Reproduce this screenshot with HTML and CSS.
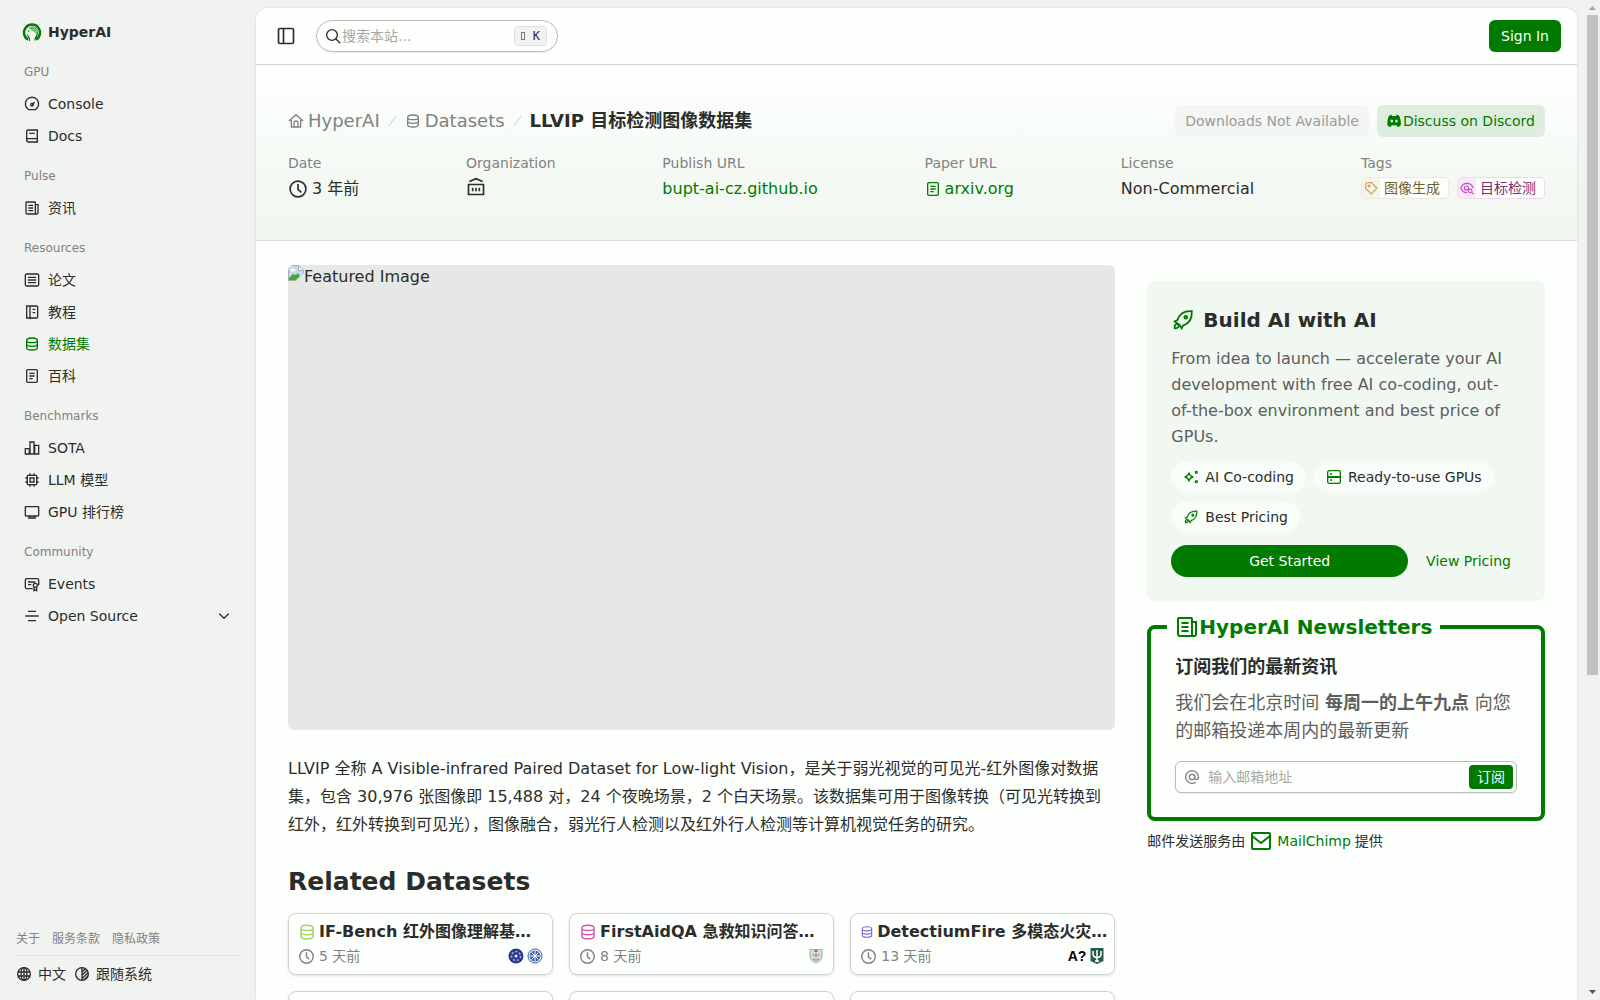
FILE: index.html
```
<!DOCTYPE html>
<html lang="zh-CN">
<head>
<meta charset="utf-8">
<meta name="viewport" content="width=device-width, initial-scale=1">
<title>LLVIP 目标检测图像数据集 | HyperAI</title>
<link rel="stylesheet" href="styles.css">
</head>
<body>
<svg class="sprite" aria-hidden="true">
  <symbol id="i-db" viewBox="0 0 24 24"><path d="M4 6.500C4 4 7 3 12 3s8 1 8 3.500v11c0 2.500-3 3.500-8 3.500s-8-1-8-3.500zM4 7c0 2 3.500 3 8 3s8-1 8-3M4 12.500c0 2 3.500 3 8 3s8-1 8-3"/></symbol>
  <symbol id="i-gauge" viewBox="0 0 24 24"><path d="M7 20.500A10 10 0 1 1 17 20.500zM12 13l4-4"/><circle cx="12" cy="13" r="2"/></symbol>
  <symbol id="i-book" viewBox="0 0 24 24"><path d="M20 16H6.500a2.500 2.500 0 0 0 0 5H20V3H6a2 2 0 0 0-2 2v13.500M8 8h8"/></symbol>
  <symbol id="i-news" viewBox="0 0 24 24"><path d="M17 21H5a2 2 0 0 1-2-2V4a1 1 0 0 1 1-1h12a1 1 0 0 1 1 1zh2a2 2 0 0 0 2-2V7h-4M6.500 8h7M6.500 12h7M6.500 16h7"/></symbol>
  <symbol id="i-article" viewBox="0 0 24 24"><rect x="2" y="3" width="20" height="18" rx="2"/><path d="M6 8h12M6 12h12M6 16h12"/></symbol>
  <symbol id="i-notebook" viewBox="0 0 24 24"><path d="M4 3h15a1.500 1.500 0 0 1 1.500 1.500v15a1.500 1.500 0 0 1-1.500 1.500H4zM9 3v20M13 8h4M13 13h4"/></symbol>
  <symbol id="i-file" viewBox="0 0 24 24"><rect x="4" y="2.500" width="16" height="19" rx="2"/><path d="M8 8h8M8 12h8M8 16h5"/></symbol>
  <symbol id="i-bars" viewBox="0 0 24 24"><path d="M2 13h6v8H2zM9 3h6v18H9zM16 8h6v13h-6z"/></symbol>
  <symbol id="i-cpu" viewBox="0 0 24 24"><rect x="5" y="5" width="14" height="14" rx="1"/><path d="M9 9h6v6H9zM9 2v3M15 2v3M9 19v3M15 19v3M2 9h3M2 15h3M19 9h3M19 15h3"/></symbol>
  <symbol id="i-monitor" viewBox="0 0 24 24"><rect x="2" y="4" width="20" height="14" rx="1"/><path d="M9 18v3M15 18v3M6 21h12"/></symbol>
  <symbol id="i-event" viewBox="0 0 24 24"><path d="M13 19H4a2 2 0 0 1-2-2V6a2 2 0 0 1 2-2h16a2 2 0 0 1 2 2v8M6 9h11M6 13h5M15 17v5l2-1 2 1v-5"/><circle cx="17" cy="14" r="3"/></symbol>
  <symbol id="i-lines" viewBox="0 0 24 24"><path d="M6 5h12M2 12h20M6 19h12"/></symbol>
  <symbol id="i-down" viewBox="0 0 24 24"><path d="m5 8.500 7 7 7-7"/></symbol>
  <symbol id="i-globe" viewBox="0 0 24 24"><circle cx="12" cy="12" r="9.500"/><ellipse cx="12" cy="12" rx="4.500" ry="9.500"/><path d="M3 9h18M3 15h18M12 2v20"/></symbol>
  <symbol id="i-contrast" viewBox="0 0 24 24"><circle cx="12" cy="12" r="9.500"/><path d="M12 2v20M12 9l5-5M12 14l8-8M12 19l9-9M15 21l6-6"/></symbol>
  <symbol id="i-side" viewBox="0 0 24 24"><rect x="3" y="3" width="18" height="18" rx="1.500"/><path d="M9 3v18"/></symbol>
  <symbol id="i-search" viewBox="0 0 24 24"><circle cx="10.500" cy="10.500" r="8"/><path d="m16 16 7 7"/></symbol>
  <symbol id="i-home" viewBox="0 0 24 24"><path d="m1.500 12 10.500-9.500L22.500 12M5 10v11h14V10M9 20v-5a3 3 0 0 1 6 0v5"/></symbol>
  <symbol id="i-clock" viewBox="0 0 24 24"><circle cx="12" cy="12" r="9.500"/><path d="M12 6v6.500l4 3.500"/></symbol>
  <symbol id="i-bank" viewBox="0 0 24 24"><path d="M4 5.500 12 2l8 3.500M3 9h18v12H3zM2 21h20M2 9h20M8 13v4M12 13v4M16 13v4"/></symbol>
  <symbol id="i-tag" viewBox="0 0 24 24"><path d="m3.500 3.500 9-1L22 12.500 12.500 22 2.500 12.500z"/><circle cx="8.500" cy="8.500" r="1.500"/></symbol>
  <symbol id="i-eye" viewBox="0 0 24 24"><path d="M12 20C6.500 20 3 16.500 1.500 12 3 7.500 6.500 4 12 4s9 3.500 10.500 8"/><circle cx="11" cy="12" r="3.500"/><circle cx="17.500" cy="17" r="3"/><path d="m20 19.500 3 3"/></symbol>
  <symbol id="i-discord" viewBox="-.5 -1 27 26"><path fill="currentColor" stroke="none" fill-rule="evenodd" d="M8 1.500 7.500 3.500h8L15 1.500c2 .2 3.500.8 5 1.700C22 7 23.300 12 22.800 19c-1.700 1.700-3.300 2.700-5.300 3.300L15.500 19h-8l-2 3.300c-2-.6-3.600-1.600-5.300-3.300C-.3 12 1 7 3 3.200 4.500 2.300 6 1.700 8 1.500zM7.500 9.500a2.300 2.600 0 1 0 0 5.200 2.300 2.600 0 1 0 0-5.200zm8 0a2.300 2.600 0 1 0 0 5.200 2.300 2.600 0 1 0 0-5.200z"/></symbol>
  <symbol id="i-rocket" viewBox="-1 -1 26 26"><path d="M6 12C8 6 13 2 21.500 2.500 22 11 18 16 12 18l-1.500 3-2.500-4-1.500-1L3 13.500zM3 21c-.3-3 .5-4.800 2.500-4.500S8 18 7 19.500 5 21 3 21z"/><circle cx="15" cy="9" r="1.500"/></symbol>
  <symbol id="i-spark" viewBox="0 0 24 24"><path d="M9 5.500c.8 4.200 2.300 5.700 6.500 6.500-4.200.8-5.700 2.300-6.500 6.500-.8-4.200-2.300-5.700-6.500-6.500 4.200-.8 5.700-2.300 6.500-6.500z"/><circle cx="20" cy="5" r="1.500"/><circle cx="20" cy="19" r="1.500"/></symbol>
  <symbol id="i-server" viewBox="0 0 24 24"><rect x="2.500" y="2.500" width="19" height="19" rx="2.500"/><path d="M2.500 12h19" stroke-width="3"/><path d="M6 7.500h3M6 16.500h3"/></symbol>
  <symbol id="i-at" viewBox="0 0 24 24"><circle cx="12" cy="12" r="4"/><path d="M16 8v5.500c0 3.500 5.500 3.500 5.500-1.500A9.500 9.500 0 1 0 17.500 19.800"/></symbol>
  <symbol id="i-mail" viewBox="0 0 24 24"><rect x="3" y="4" width="18" height="16" rx="1"/><path d="m3 7 9 7 9-7"/></symbol>
</svg>

<div class="app">
  <aside class="sidebar">
    <a class="brand" href="#">
      <svg class="logo" viewBox="0 0 20 20" aria-hidden="true"><path d="M6 17.500A8 8 0 1 1 14 17.500" fill="none" stroke="#007b00" stroke-width="2.400"/><path d="M7.500 19c.2-3-.6-4.500-2.200-6.500M12.800 18.500c0-3.500 2.500-4 2.700-7.500" fill="none" stroke="#007b00" stroke-width="1.200"/><path d="M7 6c2.500-2.500 6.500-2 8.500 2 .7 1.600.5 2.500.2 3.500-1.500-.7-2.700-.7-4.200-2S8.500 7.500 7 6z" fill="#3fa03f"/><path d="M9 5.500l5 5M11.500 5l3.500 5" stroke="#f1f3f1" stroke-width=".7"/><circle cx="6.500" cy="9" r=".8" fill="#007b00"/></svg>
      <span>HyperAI</span>
    </a>
    <nav class="nav">
      <h2>GPU</h2>
      <a href="#"><svg class="icon"><use href="#i-gauge"/></svg>Console</a>
      <a href="#"><svg class="icon"><use href="#i-book"/></svg>Docs</a>
      <h2>Pulse</h2>
      <a href="#"><svg class="icon"><use href="#i-news"/></svg>资讯</a>
      <h2>Resources</h2>
      <a href="#"><svg class="icon"><use href="#i-article"/></svg>论文</a>
      <a href="#"><svg class="icon"><use href="#i-notebook"/></svg>教程</a>
      <a href="#" class="active"><svg class="icon"><use href="#i-db"/></svg>数据集</a>
      <a href="#"><svg class="icon"><use href="#i-file"/></svg>百科</a>
      <h2>Benchmarks</h2>
      <a href="#"><svg class="icon"><use href="#i-bars"/></svg>SOTA</a>
      <a href="#"><svg class="icon"><use href="#i-cpu"/></svg>LLM 模型</a>
      <a href="#"><svg class="icon"><use href="#i-monitor"/></svg>GPU 排行榜</a>
      <h2>Community</h2>
      <a href="#"><svg class="icon"><use href="#i-event"/></svg>Events</a>
      <a href="#"><svg class="icon"><use href="#i-lines"/></svg>Open Source<svg class="icon chevron"><use href="#i-down"/></svg></a>
    </nav>
    <footer class="side-foot">
      <div class="legal"><a href="#">关于</a><a href="#">服务条款</a><a href="#">隐私政策</a></div>
      <div class="prefs">
        <button type="button"><svg class="icon"><use href="#i-globe"/></svg>中文</button>
        <button type="button"><svg class="icon"><use href="#i-contrast"/></svg>跟随系统</button>
      </div>
    </footer>
  </aside>

  <main class="main">
    <header class="topbar">
      <button class="toggle" type="button" aria-label="Toggle sidebar"><svg class="icon md"><use href="#i-side"/></svg></button>
      <label class="search">
        <svg class="icon"><use href="#i-search"/></svg>
        <input type="search" placeholder="搜索本站..." aria-label="搜索本站">
        <kbd><span class="key"></span>K</kbd>
      </label>
      <button class="btn primary" type="button">Sign In</button>
    </header>

    <section class="hero">
      <div class="hero-top">
        <nav class="crumbs">
          <a href="#"><svg class="icon"><use href="#i-home"/></svg>HyperAI</a>
          <svg class="slash" viewBox="0 0 9 12"><path d="M1 11 8 1"/></svg>
          <a href="#"><svg class="icon"><use href="#i-db"/></svg>Datasets</a>
          <svg class="slash" viewBox="0 0 9 12"><path d="M1 11 8 1"/></svg>
          <h1>LLVIP 目标检测图像数据集</h1>
        </nav>
        <div class="actions">
          <button class="btn muted" type="button" disabled>Downloads Not Available</button>
          <a class="btn soft" href="#"><svg class="icon"><use href="#i-discord"/></svg>Discuss on Discord</a>
        </div>
      </div>
      <dl class="facts">
        <div><dt>Date</dt><dd><svg class="icon md"><use href="#i-clock"/></svg>3 年前</dd></div>
        <div><dt>Organization</dt><dd class="top"><svg class="icon md"><use href="#i-bank"/></svg></dd></div>
        <div><dt>Publish URL</dt><dd><a href="#">bupt-ai-cz.github.io</a></dd></div>
        <div><dt>Paper URL</dt><dd><a href="#"><svg class="icon"><use href="#i-file"/></svg>arxiv.org</a></dd></div>
        <div><dt>License</dt><dd>Non-Commercial</dd></div>
        <div><dt>Tags</dt><dd class="top tags">
          <a class="tag gold" href="#"><span><svg class="icon sm"><use href="#i-tag"/></svg></span>图像生成</a>
          <a class="tag plum" href="#"><span><svg class="icon sm"><use href="#i-eye"/></svg></span>目标检测</a>
        </dd></div>
      </dl>
    </section>

    <div class="content">
      <article class="article">
        <div class="featured">
          <svg class="broken" viewBox="0 0 16 16" aria-hidden="true"><path d="M.5.5h10l5 5v5.500l-4 4.500H.5z" fill="#c6d8f5" stroke="#a9aeb5"/><path d="M10.500.5v5h5z" fill="#fff" stroke="#a9aeb5"/><ellipse cx="5" cy="5" rx="2.500" ry="1.500" fill="#fff"/><path d="M1 15v-2l4-4 3 1 2-2 2 3-4 4z" fill="#4aa82e"/><path d="M8 16l8-8v8z" fill="#e6e8e5"/></svg><span>Featured Image</span>
        </div>
        <p>LLVIP 全称 A Visible-infrared Paired Dataset for Low-light Vision，是关于弱光视觉的可见光-红外图像对数据集，包含 30,976 张图像即 15,488 对，24 个夜晚场景，2 个白天场景。该数据集可用于图像转换（可见光转换到红外，红外转换到可见光），图像融合，弱光行人检测以及红外行人检测等计算机视觉任务的研究。</p>
        <h2>Related Datasets</h2>
        <div class="cards">
          <a class="card" href="#">
            <div class="card-title"><svg class="icon lime"><use href="#i-db"/></svg><h3>IF-Bench 红外图像理解基…</h3></div>
            <div class="card-meta"><svg class="icon"><use href="#i-clock"/></svg>5 天前
              <span class="orgs">
                <svg viewBox="0 0 16 16"><circle cx="8" cy="8" r="7.500" fill="#2b3a8c"/><circle cx="8" cy="8" r="4.500" fill="none" stroke="#aab4dc" stroke-width="1.500" stroke-dasharray="2 2"/><circle cx="8" cy="8" r="1.500" fill="#e8ebf7"/></svg>
                <svg viewBox="0 0 16 16"><circle cx="8" cy="8" r="7" fill="#fff" stroke="#3a62ab"/><circle cx="8" cy="8" r="5.500" fill="#3a62ab"/><path d="M8 3v10M3 8h10M4.500 4.500l7 7M11.500 4.500l-7 7" stroke="#fff"/></svg>
              </span>
            </div>
          </a>
          <a class="card" href="#">
            <div class="card-title"><svg class="icon pink"><use href="#i-db"/></svg><h3>FirstAidQA 急救知识问答…</h3></div>
            <div class="card-meta"><svg class="icon"><use href="#i-clock"/></svg>8 天前
              <span class="orgs">
                <svg viewBox="0 0 16 16"><path d="M2 1.500h12V8c0 4-2 5.500-6 7-4-1.500-6-3-6-7z" fill="#dcdedb" stroke="#85bfa0"/><path d="M6 4l2-3 2 3z" fill="#c94b46"/><path d="M4.500 6.500l2 1M11.500 6.500l-2 1M5 11c2 1.500 4 1.500 6 0M8 5v4" fill="none" stroke="#6d7470"/></svg>
              </span>
            </div>
          </a>
          <a class="card" href="#">
            <div class="card-title"><svg class="icon violet"><use href="#i-db"/></svg><h3>DetectiumFire 多模态火灾…</h3></div>
            <div class="card-meta"><svg class="icon"><use href="#i-clock"/></svg>13 天前
              <span class="orgs">
                <b class="aalto">A?</b>
                <svg viewBox="0 0 16 16"><path d="M1.500 0h13v13L8 16l-6.500-3z" fill="#285a4a"/><path d="M4 3v3c0 2.500 1.500 3.500 4 3.500s4-1 4-3.500V3M8 2v12M6 13h4" fill="none" stroke="#fff" stroke-width="1.500"/></svg>
              </span>
            </div>
          </a>
          <a class="card" href="#" aria-label="Dataset"></a>
          <a class="card" href="#" aria-label="Dataset"></a>
          <a class="card" href="#" aria-label="Dataset"></a>
        </div>
      </article>

      <aside class="rail">
        <section class="promo">
          <h2><svg class="icon lg"><use href="#i-rocket"/></svg>Build AI with AI</h2>
          <p>From idea to launch — accelerate your AI development with free AI co-coding, out-of-the-box environment and best price of GPUs.</p>
          <ul class="chips">
            <li><svg class="icon"><use href="#i-spark"/></svg>AI Co-coding</li>
            <li><svg class="icon"><use href="#i-server"/></svg>Ready-to-use GPUs</li>
            <li><svg class="icon"><use href="#i-rocket"/></svg>Best Pricing</li>
          </ul>
          <div class="cta">
            <a class="btn primary pill" href="#">Get Started</a>
            <a class="btn ghost" href="#">View Pricing</a>
          </div>
        </section>
        <form>
          <fieldset class="newsletter">
            <legend><svg class="icon lg"><use href="#i-news"/></svg>HyperAI Newsletters</legend>
            <h3>订阅我们的最新资讯</h3>
            <p>我们会在北京时间 <strong>每周一的上午九点</strong> 向您的邮箱投递本周内的最新更新</p>
            <label class="email">
              <svg class="icon"><use href="#i-at"/></svg>
              <input type="email" placeholder="输入邮箱地址" aria-label="邮箱地址">
              <button type="button">订阅</button>
            </label>
          </fieldset>
        </form>
        <div class="provider">邮件发送服务由 <a href="#"><svg class="icon lg"><use href="#i-mail"/></svg>MailChimp</a> 提供</div>
      </aside>
    </div>
  </main>

  <div class="scrollbar" aria-hidden="true">
    <svg viewBox="0 0 15 15"><path d="M4 10h7L7.500 6z" fill="#a3a3a3"/></svg>
    <div class="track"><div class="thumb"></div></div>
    <svg viewBox="0 0 15 15"><path d="M4 5h7L7.500 9z" fill="#505050"/></svg>
  </div>
</div>
</body>
</html>
```
FILE: styles.css
```
:root {
  --bg: #f1f3f1;
  --surface: #fdfffc;
  --text: #2a2d2a;
  --muted: #808380;
  --green: #007b00;
  --line: #d0d3d0;
}

* { box-sizing: border-box; margin: 0; padding: 0; }

body {
  height: 100vh;
  overflow: hidden;
  background: var(--bg);
  color: var(--text);
  font: 14px/20px "DejaVu Sans", "Noto Sans CJK SC", sans-serif;
}

a { color: inherit; text-decoration: none; }
button, input { font: inherit; color: inherit; border: 0; background: none; }
button { cursor: pointer; }
ul { list-style: none; }
.sprite { display: none; }

.icon {
  flex: none;
  width: 16px;
  height: 16px;
  fill: none;
  stroke: currentColor;
  stroke-width: 2;
}
.icon.sm { width: 14px; height: 14px; }
.icon.md { width: 20px; height: 20px; }
.icon.lg { width: 24px; height: 24px; }

.app { display: flex; height: 100%; }

/* Sidebar */
.sidebar {
  flex: none;
  width: 256px;
  display: flex;
  flex-direction: column;
  padding: 16px;
}
.brand {
  display: flex;
  align-items: center;
  gap: 6px;
  height: 32px;
  padding-left: 6px;
  font-weight: bold;
}
.logo { width: 20px; height: 20px; }
.nav { display: flex; flex-direction: column; padding: 0 8px; }
.nav h2 {
  margin-top: 8px;
  font-size: 12px;
  font-weight: normal;
  line-height: 32px;
  color: var(--muted);
}
.nav a { display: flex; align-items: center; gap: 8px; height: 32px; }
.nav .active { color: var(--green); }
.chevron { margin-left: auto; }
.side-foot { margin-top: auto; }
.legal {
  display: flex;
  gap: 12px;
  padding-bottom: 6px;
  border-bottom: 1px solid #dfe1df;
  font-size: 12px;
  color: var(--muted);
}
.prefs { display: flex; gap: 8px; padding-top: 8px; }
.prefs button { display: flex; align-items: center; gap: 6px; }

/* Main panel */
.main {
  flex: 1;
  min-width: 0;
  margin: 8px 8px 0 0;
  overflow: hidden;
  background: var(--surface);
  border-radius: 12px 12px 0 0;
  box-shadow: 0 0 3px rgba(0, 0, 0, .12);
}
.topbar {
  display: flex;
  align-items: center;
  gap: 16px;
  height: 57px;
  padding: 0 16px;
  border-bottom: 1px solid var(--line);
}
.toggle { display: flex; justify-content: center; width: 28px; }
.search {
  display: flex;
  align-items: center;
  width: 242px;
  height: 32px;
  padding: 0 10px 0 8px;
  border: 1px solid #b9bcb9;
  border-radius: 16px;
  box-shadow: 0 1px 2px rgba(0, 0, 0, .08);
}
.search input { flex: 1; min-width: 0; margin-left: 1px; outline: 0; }
input::placeholder { color: #a6a9a6; opacity: 1; }
kbd {
  display: flex;
  align-items: center;
  gap: 8px;
  height: 20px;
  padding: 0 6px;
  border: 1px solid #dfe1df;
  border-radius: 4px;
  background: var(--bg);
  font: 12px/18px "DejaVu Sans Mono", monospace;
}
.key { width: 4px; height: 8px; border: 1px solid #777a77; }

.btn {
  display: flex;
  align-items: center;
  justify-content: center;
  height: 32px;
  padding: 0 10px;
  border-radius: 6px;
  white-space: nowrap;
}
.primary { padding: 0 12px; background: var(--green); color: #fdfffc; }
.topbar .primary { margin-left: auto; }
.muted { background: #f4f6f4; color: #989b98; }
.soft { background: #dfeddf; color: var(--green); }
.ghost { color: var(--green); }
.pill { flex: 1; border-radius: 16px; }

.hero {
  padding: 40px 32px;
  background: linear-gradient(#fdfffc, #f0f6f0);
  box-shadow: inset 0 -1px #d9deda;
}
.hero-top { display: flex; justify-content: space-between; align-items: center; }
.crumbs {
  display: flex;
  align-items: center;
  gap: 8px;
  font-size: 18px;
  line-height: 28px;
  color: var(--muted);
}
.crumbs a { display: flex; align-items: center; gap: 4px; }
.crumbs h1 { font-size: 18px; color: var(--text); }
.slash { width: 9px; height: 12px; stroke: #c9ccc9; fill: none; }
.actions { display: flex; gap: 8px; }
.facts {
  display: flex;
  justify-content: space-between;
  margin-top: 16px;
}
.facts dt { color: var(--muted); }
.facts dd {
  display: flex;
  align-items: center;
  gap: 4px;
  height: 24px;
  margin-top: 4px;
  font-size: 16px;
  line-height: 24px;
}
.facts dd a { display: flex; align-items: center; gap: 4px; color: var(--green); }
.facts .top { align-items: flex-start; }
.facts .tags { gap: 8px; }
.facts .tag {
  gap: 4px;
  height: 22px;
  padding-right: 8px;
  border: 1px solid;
  border-radius: 5px;
  overflow: hidden;
  background: var(--surface);
  font-size: 14px;
  line-height: 20px;
}
.tag span { display: flex; align-items: center; justify-content: center; width: 18px; height: 20px; }
.facts .gold { color: #6f5f2b; border-color: #f1e8d6; }
.gold span { color: #c9a24a; background: #f8f3e9; }
.facts .plum { color: #73306f; border-color: #f1daf1; }
.plum span { color: #c94fc6; background: #f7e9f7; }

/* Content */
.content {
  display: grid;
  grid-template-columns: repeat(3, 1fr);
  gap: 32px;
  padding: 24px 32px;
}
.article { grid-column: span 2; min-width: 0; }
.featured {
  display: flex;
  align-items: flex-start;
  aspect-ratio: 16 / 9;
  border-radius: 6px;
  overflow: hidden;
  background: #e6e8e5;
  font-size: 16px;
  line-height: 24px;
}
.broken { width: 16px; height: 16px; }
.article p { margin-top: 25px; font-size: 16px; line-height: 28px; }
.article h2 { margin: 27px 0 15px; font-size: 25px; line-height: 32px; }
.cards { display: grid; grid-template-columns: repeat(3, 1fr); gap: 16px; }
.card {
  min-width: 0;
  height: 62px;
  padding: 6px 9px;
  border: 1px solid var(--line);
  border-radius: 8px;
  box-shadow: 0 1px 3px rgba(0, 0, 0, .12);
}
.card-title { display: flex; align-items: center; gap: 3px; }
.card-title .icon { flex: 0 1 18px; min-width: 14px; height: 18px; }
.card h3 {
  white-space: nowrap;
  font-size: 16px;
  line-height: 24px;
}
.card-meta { display: flex; align-items: center; gap: 4px; line-height: 24px; color: var(--muted); }
.card-meta .icon { width: 17px; height: 17px; }
.lime { color: #a5d167; }
.pink { color: #d05cb0; }
.violet { color: #8468dc; }
.orgs { display: flex; align-items: center; gap: 3px; margin-left: auto; }
.orgs svg { width: 16px; height: 16px; }
.aalto { color: #000; font: bold 14px/16px "Liberation Sans", sans-serif; }

/* Right rail */
.rail { display: flex; flex-direction: column; margin-top: 16px; min-width: 0; }
.promo { padding: 24px; border-radius: 8px; background: #f1f7f1; }
.promo h2 { display: flex; align-items: center; gap: 8px; font-size: 20px; line-height: 30px; }
.promo h2 .icon, .chips .icon { color: var(--green); }
.promo p { margin: 11px 0; padding-right: 8px; font-size: 16px; line-height: 26px; color: #5c5f5c; }
.chips { display: flex; flex-wrap: wrap; gap: 8px; }
.chips li {
  display: flex;
  align-items: center;
  gap: 6px;
  height: 32px;
  padding: 0 12px;
  border-radius: 16px;
  background: #f9fdf9;
}
.cta { display: flex; gap: 8px; margin-top: 12px; }

.newsletter {
  min-width: 0;
  margin-top: 12px;
  padding: 12px 24px 24px;
  border: 4px solid var(--green);
  border-radius: 8px;
}
.newsletter legend {
  display: flex;
  align-items: center;
  margin-left: -8px;
  padding: 0 8px;
  font-size: 20px;
  font-weight: bold;
  line-height: 28px;
  color: var(--green);
}
.newsletter h3 { font-size: 18px; line-height: 28px; }
.newsletter p { margin: 8px 0 16px; font-size: 18px; line-height: 28px; color: #5c5f5c; }
.email {
  display: flex;
  align-items: center;
  gap: 8px;
  height: 32px;
  padding: 0 3px 0 8px;
  border: 1px solid #b9bcb9;
  border-radius: 6px;
  box-shadow: 0 1px 2px rgba(0, 0, 0, .08);
}
.email .icon { color: var(--muted); }
.email input { flex: 1; min-width: 0; outline: 0; }
.email button {
  height: 24px;
  padding: 0 8px;
  border-radius: 4px;
  background: var(--green);
  color: #fdfffc;
}
.provider { display: flex; align-items: center; gap: 4px; margin-top: 8px; line-height: 24px; }
.provider a { display: flex; align-items: center; gap: 4px; color: var(--green); }

/* Scrollbar */
.scrollbar { flex: none; display: flex; flex-direction: column; width: 15px; background: #f1f1f1; }
.scrollbar svg { width: 15px; height: 15px; }
.track { flex: 1; padding: 0 2px; }
.thumb { height: 68%; background: #c1c1c1; }
```
